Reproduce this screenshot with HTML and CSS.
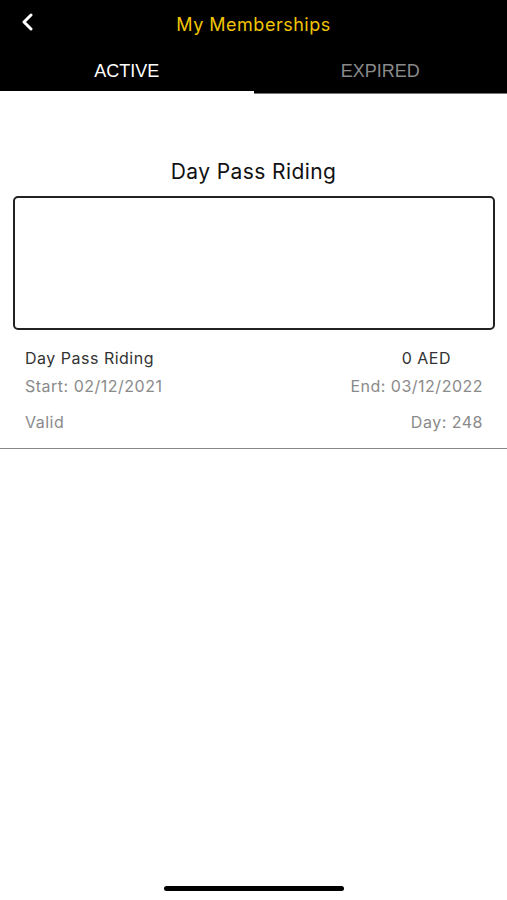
FILE: index.html
```html
<!DOCTYPE html>
<html lang="en">
<head>
  <meta charset="UTF-8">
  <title>My Memberships</title>
  <link rel="stylesheet" href="styles.css">
</head>
<body>

  <div class="topbar">
    <div class="nav">
      <span class="back">
        <svg width="14" height="18" viewBox="0 0 14 18">
          <path d="M10 2 L3 9 L10 16" fill="none" stroke="#fff" stroke-width="3" stroke-linecap="round" stroke-linejoin="round"/>
        </svg>
      </span>
      <h1>My Memberships</h1>
    </div>
    <div class="tabs">
      <div class="tab active">ACTIVE</div>
      <div class="tab">EXPIRED</div>
    </div>
  </div>

  <div class="content">
    <h2>Day Pass Riding</h2>
    <div class="card"></div>

    <div class="info">
      <div class="row main">
        <span>Day Pass Riding</span>
        <span class="price">0 AED</span>
      </div>
      <div class="row">
        <span>Start: 02/12/2021</span>
        <span>End: 03/12/2022</span>
      </div>
      <div class="row last">
        <span>Valid</span>
        <span>Day: 248</span>
      </div>
    </div>
  </div>

  <div class="home-bar"></div>

</body>
</html>
```

FILE: styles.css
```css
body {
  margin: 0;
  font-family: Inter, "Noto Sans", sans-serif;
  background-color: white;
  height: 900px;
  position: relative;
}

.topbar {
  background-color: black;
}

.nav {
  height: 48px;
  display: flex;
  align-items: center;
  justify-content: center;
  position: relative;
}

.back {
  position: absolute;
  left: 21px;
  top: 13px;
}

.nav h1 {
  margin: 0;
  font-size: 18px;
  font-weight: normal;
  letter-spacing: 0.5px;
  color: #f2c500;
}

.tabs {
  display: flex;
  height: 45px;
  border-bottom: 1px solid #777;
}

.tab {
  flex: 1;
  display: flex;
  align-items: center;
  justify-content: center;
  font-family: "Liberation Sans", Arial, sans-serif;
  font-size: 18px;
  color: #8a8a8a;
  padding-top: 4px;
  padding-bottom: 3px;
}

.tab.active {
  color: white;
  border-bottom: 3px solid white;
  padding-bottom: 0;
  margin-bottom: -1px;
}

.content {
  padding-top: 60px;
}

.content h2 {
  margin: 0;
  text-align: center;
  font-size: 21px;
  font-weight: normal;
  letter-spacing: 0.4px;
  color: #111;
  line-height: 36px;
}

.card {
  margin: 6px 12px 0 13px;
  height: 130px;
  border: 2px solid #222;
  border-radius: 5px;
}

.info {
  margin-top: 14px;
  border-bottom: 1px solid #888;
}

.row {
  display: flex;
  justify-content: space-between;
  padding: 0 24px 0 25px;
  font-size: 16px;
  letter-spacing: 0.5px;
  color: #8a8a8a;
  line-height: 28px;
}

.row.main {
  color: #333;
}

.row.main .price {
  margin-right: 32px;
}

.row.last {
  margin-top: 8px;
  padding-bottom: 12px;
}

.home-bar {
  position: absolute;
  left: 164px;
  top: 886px;
  width: 180px;
  height: 5px;
  border-radius: 3px;
  background-color: black;
}
```
